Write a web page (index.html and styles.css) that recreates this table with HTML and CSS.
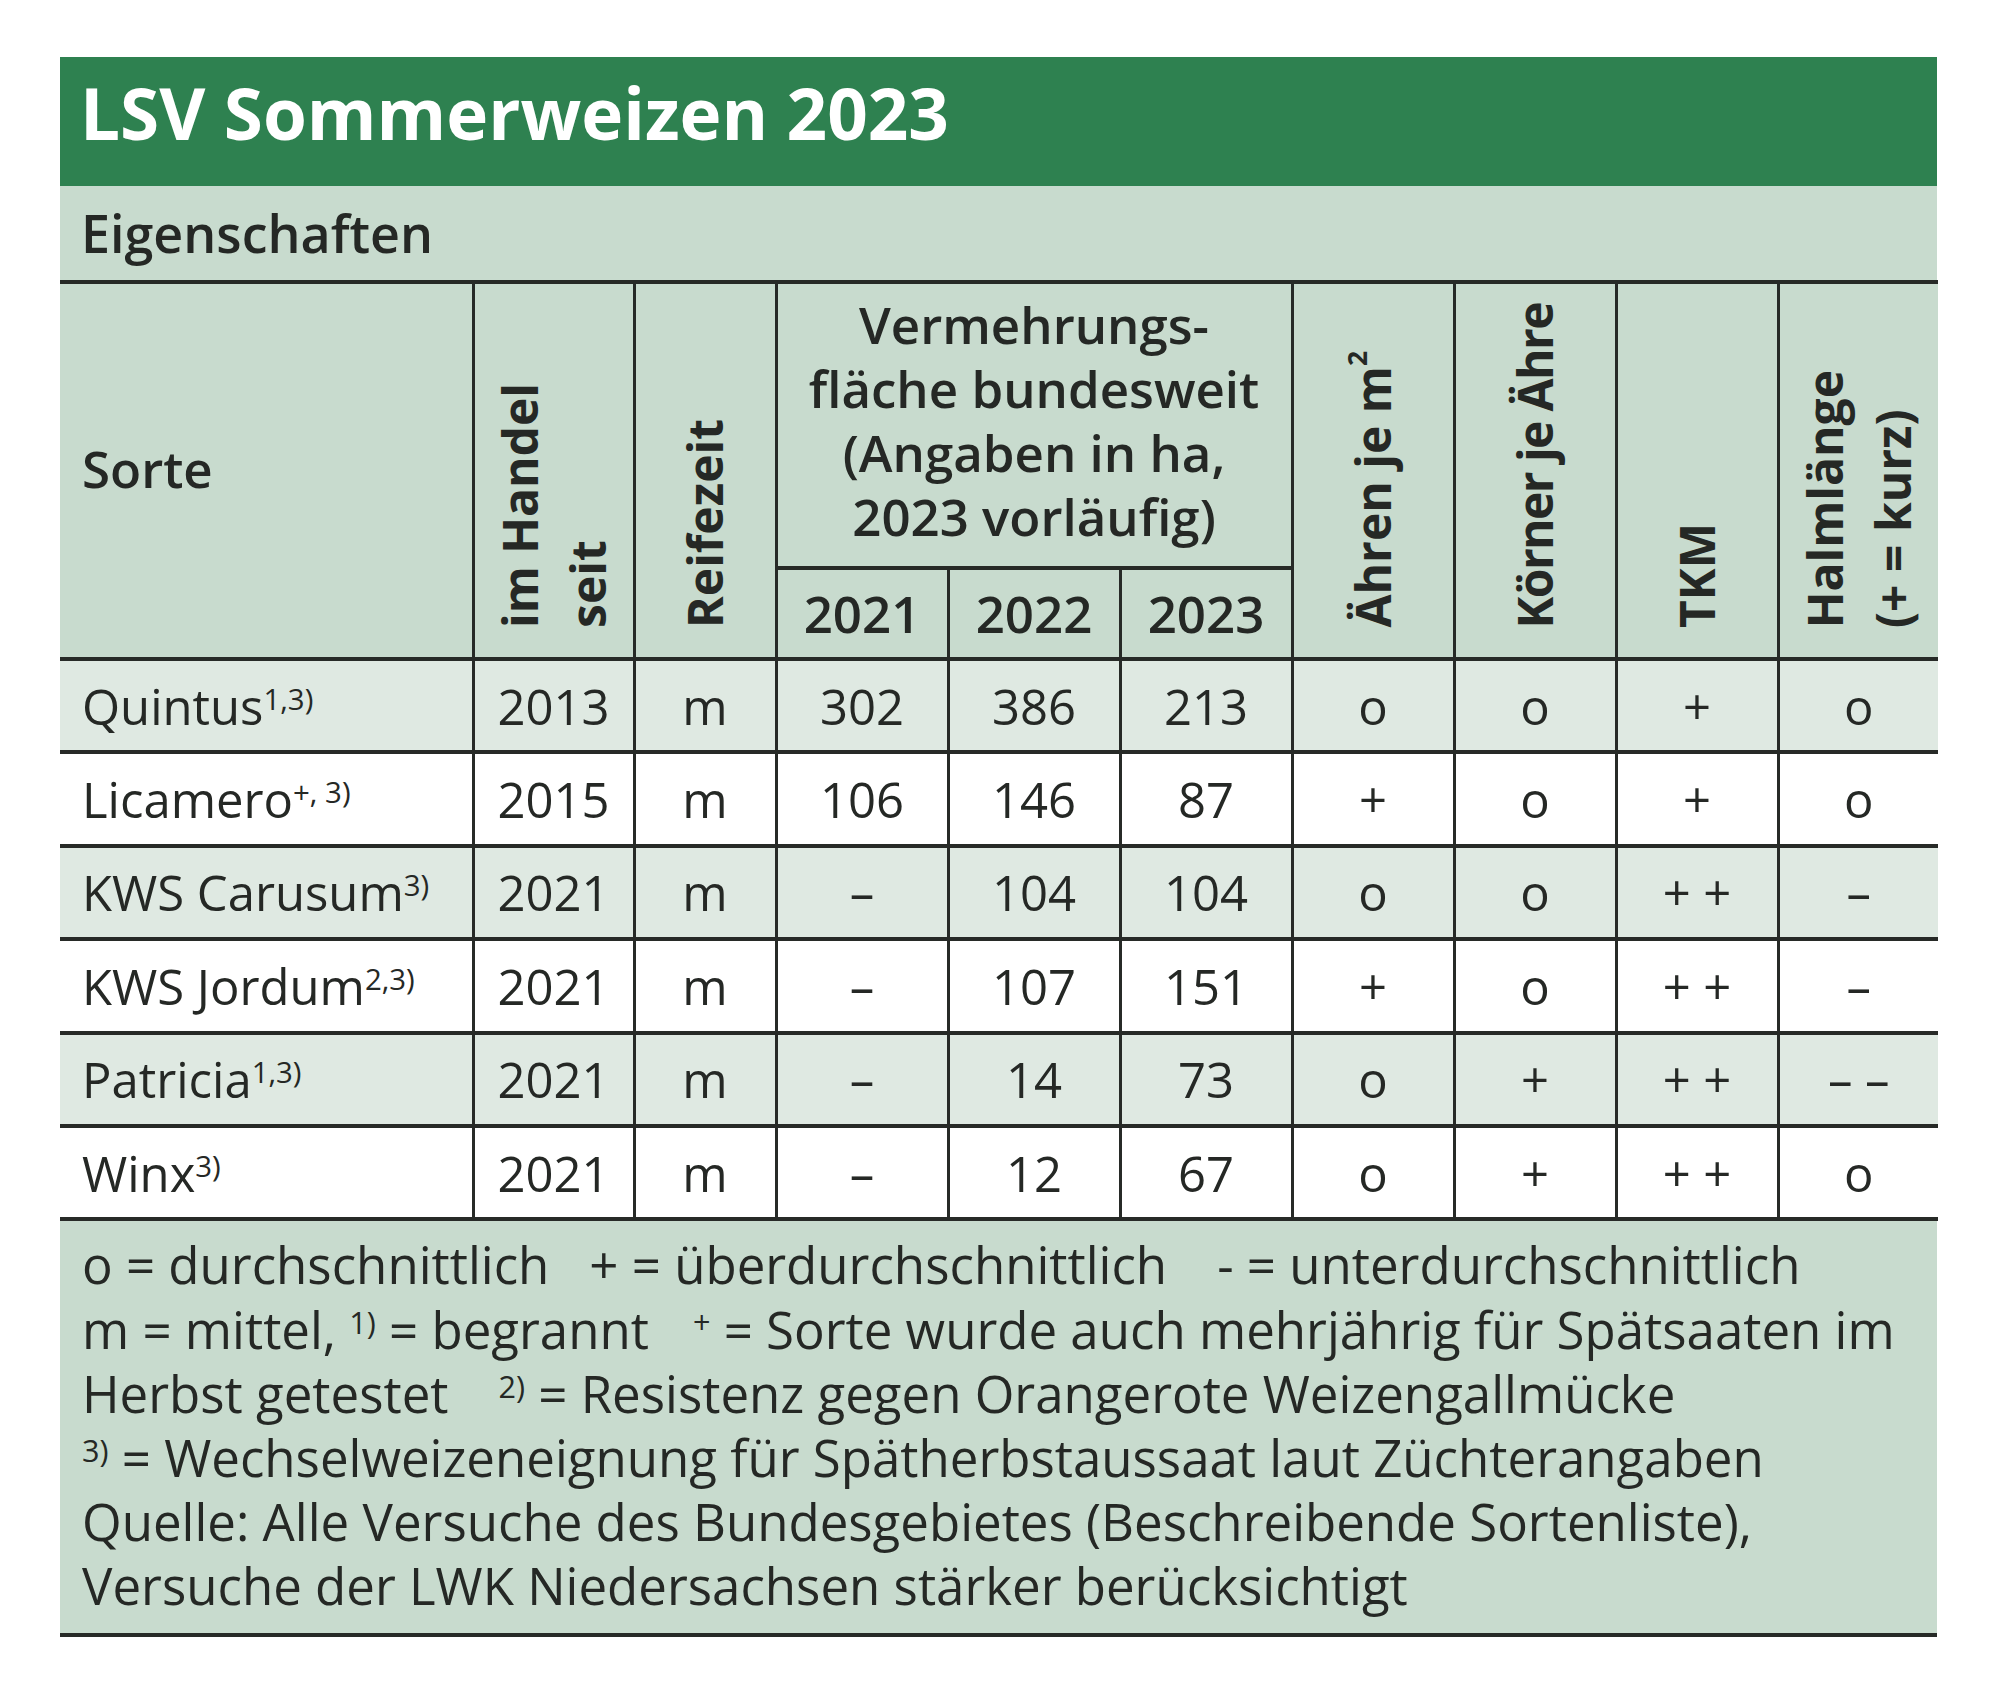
FILE: index.html
```html
<!DOCTYPE html>
<html lang="de">
<head>
<meta charset="utf-8">
<title>LSV Sommerweizen 2023</title>
<link rel="stylesheet" href="styles.css">
</head>
<body>
<div class="sheet">
  <div class="title">LSV Sommerweizen 2023</div>
  <div class="subtitle">Eigenschaften</div>
  <table class="grid">
    <colgroup>
      <col class="w-sorte">
      <col class="w-handel">
      <col class="w-reife">
      <col class="w-year">
      <col class="w-year">
      <col class="w-year">
      <col class="w-prop">
      <col class="w-prop">
      <col class="w-prop">
      <col class="w-halm">
    </colgroup>
    <thead>
      <tr class="head-top">
        <th rowspan="2" class="sorte-h">Sorte</th>
        <th rowspan="2" class="rot"><span class="vt">im Handel<br>seit</span></th>
        <th rowspan="2" class="rot"><span class="vt">Reifezeit</span></th>
        <th colspan="3" class="group">Vermehrungs-<br>fläche bundesweit<br>(Angaben in ha,<br>2023 vorläufig)</th>
        <th rowspan="2" class="rot"><span class="vt">Ähren je m<sup class="sq">2</sup></span></th>
        <th rowspan="2" class="rot"><span class="vt tight">Körner je Ähre</span></th>
        <th rowspan="2" class="rot"><span class="vt">TKM</span></th>
        <th rowspan="2" class="rot"><span class="vt">Halmlänge<br>(+ = kurz)</span></th>
      </tr>
      <tr class="head-years">
        <th class="year">2021</th>
        <th class="year">2022</th>
        <th class="year">2023</th>
      </tr>
    </thead>
    <tbody>
      <tr class="alt">
        <td class="name">Quintus<sup>1,3)</sup></td>
        <td>2013</td><td>m</td><td>302</td><td>386</td><td>213</td><td>o</td><td>o</td><td>+</td><td>o</td>
      </tr>
      <tr>
        <td class="name">Licamero<sup>+, 3)</sup></td>
        <td>2015</td><td>m</td><td>106</td><td>146</td><td>87</td><td>+</td><td>o</td><td>+</td><td>o</td>
      </tr>
      <tr class="alt">
        <td class="name">KWS Carusum<sup>3)</sup></td>
        <td>2021</td><td>m</td><td>–</td><td>104</td><td>104</td><td>o</td><td>o</td><td>+ +</td><td>–</td>
      </tr>
      <tr>
        <td class="name">KWS Jordum<sup>2,3)</sup></td>
        <td>2021</td><td>m</td><td>–</td><td>107</td><td>151</td><td>+</td><td>o</td><td>+ +</td><td>–</td>
      </tr>
      <tr class="alt">
        <td class="name">Patricia<sup>1,3)</sup></td>
        <td>2021</td><td>m</td><td>–</td><td>14</td><td>73</td><td>o</td><td>+</td><td>+ +</td><td>– –</td>
      </tr>
      <tr>
        <td class="name">Winx<sup>3)</sup></td>
        <td>2021</td><td>m</td><td>–</td><td>12</td><td>67</td><td>o</td><td>+</td><td>+ +</td><td>o</td>
      </tr>
    </tbody>
  </table>
  <div class="notes">
    <div class="line">o = durchschnittlich<span class="gap g1"></span>+ = überdurchschnittlich<span class="gap g1b"></span>- = unterdurchschnittlich</div>
    <div class="line">m = mittel, <sup>1)</sup> = begrannt<span class="gap g2"></span><sup>+</sup> = Sorte wurde auch mehrjährig für Spätsaaten im</div>
    <div class="line">Herbst getestet<span class="gap g3"></span><sup>2)</sup> = Resistenz gegen Orangerote Weizengallmücke</div>
    <div class="line"><sup>3)</sup> = Wechselweizeneignung für Spätherbstaussaat laut Züchterangaben</div>
    <div class="line">Quelle: Alle Versuche des Bundesgebietes (Beschreibende Sortenliste),</div>
    <div class="line">Versuche der LWK Niedersachsen stärker berücksichtigt</div>
  </div>
</div>
</body>
</html>
```

FILE: styles.css
```css
* {
  box-sizing: border-box;
}

body {
  margin: 0;
  background: #ffffff;
  font-family: "Open Sans", "Noto Sans", "Liberation Sans", sans-serif;
  color: #252825;
}

.sheet {
  width: 1877px;
  margin: 57px 0 0 60px;
}

.title {
  display: flex;
  align-items: center;
  height: 129px;
  padding: 0 0 18px 20px;
  background: #2e8150;
  color: #ffffff;
  font-weight: 700;
  font-size: 71px;
  line-height: 1;
  white-space: nowrap;
}

.subtitle {
  display: flex;
  align-items: center;
  height: 94px;
  padding-left: 21px;
  background: #c8dbce;
  font-weight: 600;
  font-size: 52px;
  line-height: 1;
}

.grid {
  width: 1877px;
  table-layout: fixed;
  border-collapse: collapse;
  border-top: 4px solid #272a27;
}

.w-sorte { width: 413px; }
.w-handel { width: 161px; }
.w-reife { width: 142px; }
.w-year { width: 172px; }
.w-prop { width: 162px; }
.w-halm { width: 160px; }

.grid th,
.grid td {
  padding: 0;
  border-bottom: 4px solid #272a27;
  border-left: 3px solid #272a27;
  text-align: center;
  white-space: nowrap;
}

.grid th:first-child,
.grid td:first-child {
  border-left: none;
}

.grid thead th {
  background: #c8dbce;
  font-weight: 600;
  font-size: 51px;
}

.head-top {
  height: 286px;
}

.head-years {
  height: 91px;
}

.head-years th.year {
  border-left: 3px solid #272a27;
  line-height: 1.2;
}

.sorte-h {
  text-align: left !important;
  padding-left: 22px !important;
  padding-bottom: 6px !important;
  vertical-align: middle;
}

.group {
  vertical-align: top;
  padding-top: 8px !important;
  line-height: 64px;
}

.rot {
  vertical-align: bottom;
  padding-bottom: 29px !important;
  line-height: 0;
  font-size: 0 !important;
}

.vt {
  display: inline-block;
  vertical-align: bottom;
  writing-mode: vertical-rl;
  transform: rotate(180deg);
  text-align: start;
  font-size: 48px;
  font-weight: 700;
  line-height: 68px;
  white-space: nowrap;
}

.vt.tight {
  letter-spacing: -1.6px;
}

.vt .sq {
  font-size: 0.55em;
  vertical-align: 0.6em;
  line-height: 0;
}

.grid tbody tr {
  height: 93.4px;
}

.grid tbody td {
  font-size: 49px;
  font-weight: 400;
  vertical-align: middle;
  background: #ffffff;
}

.grid tbody tr.alt td {
  background: #dfe9e2;
}

.grid td.name {
  text-align: left;
  padding-left: 22px;
}

sup {
  font-size: 0.6em;
  vertical-align: 0.5em;
  line-height: 0;
}

.notes {
  background: #c8dbce;
  border-bottom: 4px solid #272a27;
  padding: 11px 0 15px 22px;
  font-size: 51px;
  line-height: 64.2px;
  white-space: nowrap;
}

.gap {
  display: inline-block;
}

.g1 { width: 40px; }
.g1b { width: 50px; }
.g2 { width: 44px; }
.g3 { width: 50px; }
```
